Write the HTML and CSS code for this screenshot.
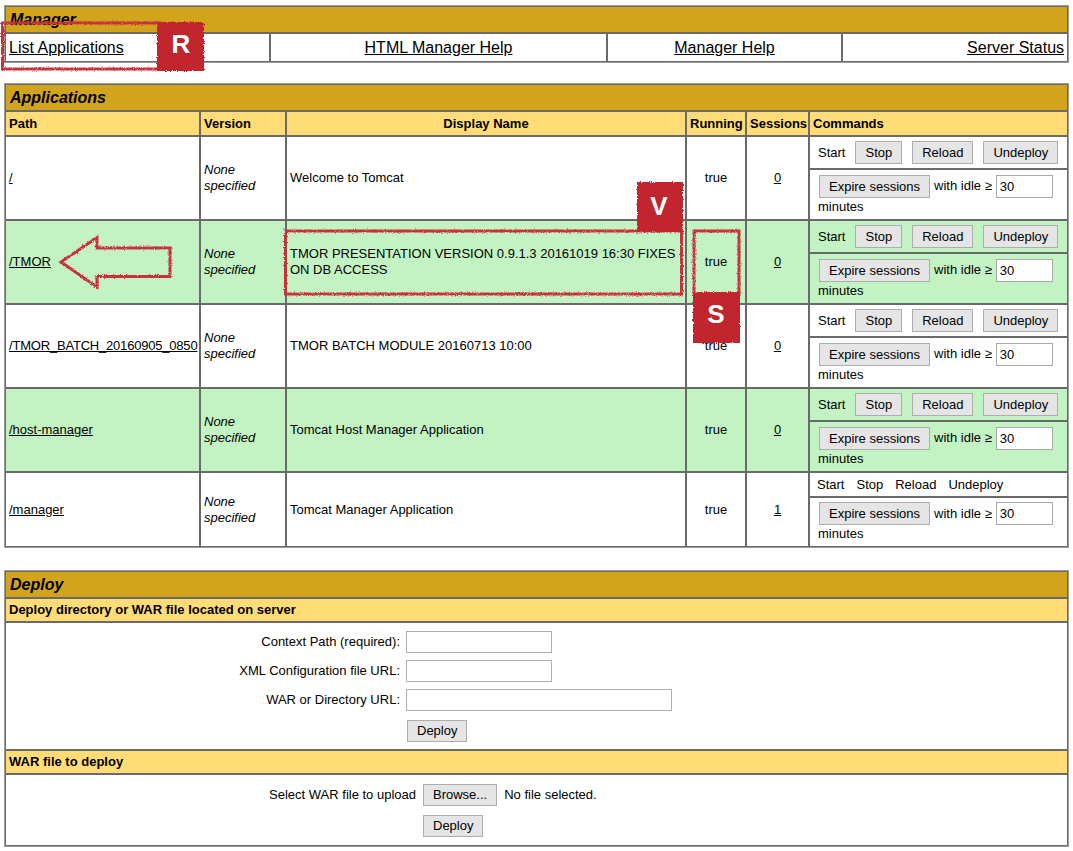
FILE: index.html
```html
<!DOCTYPE html>
<html lang="en">
<head>
<meta charset="utf-8">
<title>/manager</title>
<link rel="stylesheet" href="styles.css">
</head>
<body>
<table class="box mgr">
  <colgroup><col class="m1"><col class="m2"><col class="m3"><col class="m4"></colgroup>
  <tr class="r-title"><td colspan="4" class="title">Manager</td></tr>
  <tr class="r-links">
    <td class="lk-l"><a href="#">List Applications</a></td>
    <td class="lk-c"><a href="#">HTML Manager Help</a></td>
    <td class="lk-c"><a href="#">Manager Help</a></td>
    <td class="lk-r"><a href="#">Server Status</a></td>
  </tr>
</table>

<table class="box apps">
  <colgroup><col class="c-path"><col class="c-ver"><col class="c-name"><col class="c-run"><col class="c-ses"><col class="c-cmd"></colgroup>
  <tr class="r-title"><td colspan="6" class="title">Applications</td></tr>
  <tr class="r-head">
    <td class="head">Path</td>
    <td class="head">Version</td>
    <td class="head center">Display Name</td>
    <td class="head center">Running</td>
    <td class="head center">Sessions</td>
    <td class="head">Commands</td>
  </tr>

  <tr class="r-a">
    <td rowspan="2" class="path"><a href="#">/</a></td>
    <td rowspan="2" class="ver">None specified</td>
    <td rowspan="2" class="name">Welcome to Tomcat</td>
    <td rowspan="2" class="center">true</td>
    <td rowspan="2" class="center"><a href="#">0</a></td>
    <td class="cmd"><div class="cmd-row"><span>Start</span><button class="btn">Stop</button><button class="btn">Reload</button><button class="btn">Undeploy</button></div></td>
  </tr>
  <tr class="r-b">
    <td class="cmd"><div class="exp-line"><button class="btn exp">Expire sessions</button><span class="idle">with idle ≥</span><input class="idle-in" type="text" value="30"></div><div class="min">minutes</div></td>
  </tr>

  <tr class="r-a alt">
    <td rowspan="2" class="path"><a href="#">/TMOR</a></td>
    <td rowspan="2" class="ver">None specified</td>
    <td rowspan="2" class="name">TMOR PRESENTATION VERSION 0.9.1.3 20161019 16:30 FIXES ON DB ACCESS</td>
    <td rowspan="2" class="center">true</td>
    <td rowspan="2" class="center"><a href="#">0</a></td>
    <td class="cmd"><div class="cmd-row"><span>Start</span><button class="btn">Stop</button><button class="btn">Reload</button><button class="btn">Undeploy</button></div></td>
  </tr>
  <tr class="r-b alt">
    <td class="cmd"><div class="exp-line"><button class="btn exp">Expire sessions</button><span class="idle">with idle ≥</span><input class="idle-in" type="text" value="30"></div><div class="min">minutes</div></td>
  </tr>

  <tr class="r-a">
    <td rowspan="2" class="path"><a href="#" class="long">/TMOR_BATCH_20160905_0850</a></td>
    <td rowspan="2" class="ver">None specified</td>
    <td rowspan="2" class="name">TMOR BATCH MODULE 20160713 10:00</td>
    <td rowspan="2" class="center">true</td>
    <td rowspan="2" class="center"><a href="#">0</a></td>
    <td class="cmd"><div class="cmd-row"><span>Start</span><button class="btn">Stop</button><button class="btn">Reload</button><button class="btn">Undeploy</button></div></td>
  </tr>
  <tr class="r-b">
    <td class="cmd"><div class="exp-line"><button class="btn exp">Expire sessions</button><span class="idle">with idle ≥</span><input class="idle-in" type="text" value="30"></div><div class="min">minutes</div></td>
  </tr>

  <tr class="r-a alt">
    <td rowspan="2" class="path"><a href="#">/host-manager</a></td>
    <td rowspan="2" class="ver">None specified</td>
    <td rowspan="2" class="name">Tomcat Host Manager Application</td>
    <td rowspan="2" class="center">true</td>
    <td rowspan="2" class="center"><a href="#">0</a></td>
    <td class="cmd"><div class="cmd-row"><span>Start</span><button class="btn">Stop</button><button class="btn">Reload</button><button class="btn">Undeploy</button></div></td>
  </tr>
  <tr class="r-b alt">
    <td class="cmd"><div class="exp-line"><button class="btn exp">Expire sessions</button><span class="idle">with idle ≥</span><input class="idle-in" type="text" value="30"></div><div class="min">minutes</div></td>
  </tr>

  <tr class="r-a2">
    <td rowspan="2" class="path"><a href="#">/manager</a></td>
    <td rowspan="2" class="ver">None specified</td>
    <td rowspan="2" class="name">Tomcat Manager Application</td>
    <td rowspan="2" class="center">true</td>
    <td rowspan="2" class="center"><a href="#">1</a></td>
    <td class="cmd"><div class="cmd-row plain"><span>Start</span><span>Stop</span><span>Reload</span><span>Undeploy</span></div></td>
  </tr>
  <tr class="r-b2">
    <td class="cmd"><div class="exp-line"><button class="btn exp">Expire sessions</button><span class="idle">with idle ≥</span><input class="idle-in" type="text" value="30"></div><div class="min">minutes</div></td>
  </tr>
</table>

<table class="box deploy">
  <tr class="r-title"><td class="title">Deploy</td></tr>
  <tr class="r-dhead"><td class="head">Deploy directory or WAR file located on server</td></tr>
  <tr class="r-form1">
    <td class="form-cell">
      <div class="form f1">
        <span class="lab">Context Path (required):</span><input class="txt" type="text">
        <span class="lab">XML Configuration file URL:</span><input class="txt" type="text">
        <span class="lab">WAR or Directory URL:</span><input class="txt wide" type="text">
        <span></span><button class="btn dep">Deploy</button>
      </div>
    </td>
  </tr>
  <tr class="r-dhead"><td class="head">WAR file to deploy</td></tr>
  <tr class="r-form2">
    <td class="form-cell">
      <div class="form f2">
        <span class="lab">Select WAR file to upload</span>
        <div class="file"><button class="btn">Browse...</button><span>No file selected.</span></div>
        <span></span><button class="btn dep">Deploy</button>
      </div>
    </td>
  </tr>
</table>

<svg class="marks" width="1073" height="851" viewBox="0 0 1073 851" aria-hidden="true">
  <defs>
    <filter id="rough" filterUnits="userSpaceOnUse" x="0" y="0" width="1073" height="851">
      <feTurbulence type="fractalNoise" baseFrequency="0.9" numOctaves="2" seed="3" result="n"/>
      <feDisplacementMap in="SourceGraphic" in2="n" scale="3" xChannelSelector="R" yChannelSelector="G"/>
    </filter>
  </defs>
  <g class="outline" filter="url(#rough)">
    <rect x="2.5" y="23" width="158" height="46"/>
    <polygon points="61,262 97,237.5 97,248 170,248 170,276.5 97,276.5 97,287"/>
    <rect x="285.5" y="231" width="396" height="63"/>
    <rect x="694" y="231" width="45" height="63"/>
  </g>
  <g class="tag" filter="url(#rough)">
    <rect x="157" y="22" width="47" height="49"/>
    <rect x="637" y="182" width="46" height="50"/>
    <rect x="693" y="292" width="47" height="51"/>
  </g>
  <g class="tag-text">
    <text x="181" y="53">R</text>
    <text x="659" y="215">V</text>
    <text x="716" y="323">S</text>
  </g>
</svg>
</body>
</html>
```

FILE: styles.css
```css
html {
  background: #ffffff;
}

body {
  margin: 5px 4px 0 4px;
  font-family: "Liberation Sans", Arial, Helvetica, sans-serif;
  font-size: 13px;
  color: #000000;
}

a {
  color: #000000;
  text-decoration: underline;
}

table.box {
  width: 100%;
  table-layout: fixed;
  border-collapse: separate;
  border-spacing: 0;
  border: 1px solid #9c9c9c;
}

table.box td {
  border: 1px solid #6a6a6a;
  padding: 0 3px;
  vertical-align: middle;
  line-height: 16px;
}

.mgr {
  margin-bottom: 20px;
}

.apps {
  margin-bottom: 22px;
}

/* column widths */
.m1 { width: 265px; }
.m2 { width: 337px; }
.m3 { width: 235px; }
.m4 { width: 226px; }

.c-path { width: 195px; }
.c-ver { width: 86px; }
.c-name { width: 400px; }
.c-run { width: 60px; }
.c-ses { width: 63px; }
.c-cmd { width: 259px; }

/* rows */
.r-title { height: 27px; }
.r-links { height: 29px; }
.r-head { height: 25px; }
.r-a { height: 33px; }
.r-b { height: 51px; }
.r-a2 { height: 25px; }
.r-b2 { height: 50px; }
.r-dhead { height: 24px; }
.r-form1 { height: 128px; }
.r-form2 { height: 72px; }

table.box td.title {
  background: #d2a41c;
  font-size: 16px;
  font-weight: bold;
  font-style: italic;
  padding-left: 4px;
}

.r-links td {
  font-size: 16px;
}

.lk-l {
  text-align: left;
}

.lk-c {
  text-align: center;
}

.lk-r {
  text-align: right;
}

table.box td.head {
  background: #ffdc75;
  font-weight: bold;
}

table.box td.center {
  text-align: center;
}

.alt td {
  background: #c3f3c3;
}

.ver {
  font-style: italic;
}

.long {
  letter-spacing: -0.2px;
}

table.box td.cmd {
  padding: 0 4px 0 8px;
}

.cmd-row {
  display: flex;
  align-items: center;
  gap: 10px;
}

.cmd-row.plain {
  gap: 12px;
  margin-left: -1px;
}

.exp-line {
  display: flex;
  align-items: center;
}

.btn {
  font-family: "Liberation Sans", Arial, Helvetica, sans-serif;
  font-size: 13px;
  color: #000000;
  height: 23px;
  padding: 0 9px;
  margin: 0;
  border: 1px solid #adadad;
  border-radius: 0;
  background: #e5e5e5;
  line-height: 21px;
}

.btn.exp {
  margin-left: 1px;
}

.idle {
  margin: 0 4px;
}

.idle-in {
  width: 57px;
  height: 23px;
  box-sizing: border-box;
  border: 1px solid #a9a9a9;
  padding: 1px 3px;
  margin: 0;
  font-family: "Liberation Sans", Arial, Helvetica, sans-serif;
  font-size: 13px;
  color: #000000;
  background: #ffffff;
}

.min {
  line-height: 16px;
  padding-top: 1px;
}

/* deploy forms */
table.box td.form-cell {
  padding: 0;
}

.form {
  display: grid;
  align-items: center;
}

.f1 {
  grid-template-columns: 394px auto;
  column-gap: 6px;
  row-gap: 7px;
  padding: 7px 0;
}

.f2 {
  grid-template-columns: 410px auto;
  column-gap: 7px;
  row-gap: 9px;
  padding: 9px 0 8px;
}

.lab {
  text-align: right;
}

.txt {
  width: 146px;
  height: 22px;
  box-sizing: border-box;
  border: 1px solid #b0b0b0;
  margin: 0;
  padding: 1px 3px;
  font-family: "Liberation Sans", Arial, Helvetica, sans-serif;
  font-size: 13px;
  background: #ffffff;
}

.txt.wide {
  width: 266px;
}

.btn.dep {
  justify-self: start;
  height: 22px;
  line-height: 20px;
}

.f1 .btn.dep {
  margin-top: 2px;
  margin-left: 1px;
}

.file {
  display: flex;
  align-items: center;
  gap: 7px;
}

.file .btn {
  height: 22px;
  line-height: 20px;
}

/* annotations overlay */
.marks {
  position: absolute;
  left: 0;
  top: 0;
  pointer-events: none;
}

.outline {
  fill: none;
  stroke: #c8323d;
  stroke-width: 3;
}

.tag {
  fill: #c1272d;
}

.tag-text {
  fill: #ffffff;
  font-family: "Liberation Sans", Arial, Helvetica, sans-serif;
  font-size: 26px;
  font-weight: bold;
  text-anchor: middle;
}
```
